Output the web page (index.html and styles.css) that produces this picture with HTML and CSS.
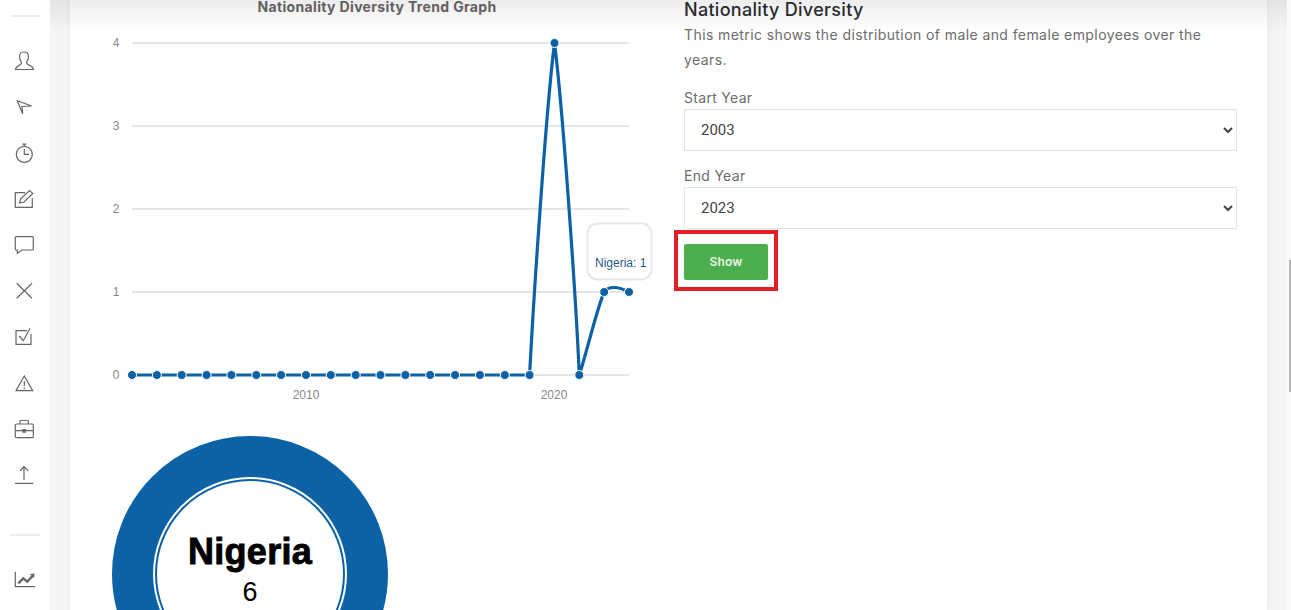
FILE: index.html
```html
<!DOCTYPE html>
<html lang="en">
<head>
  <meta charset="UTF-8" />
  <meta name="viewport" content="width=device-width, initial-scale=1.0"/>
  <title>Nationality Diversity</title>
  <link rel="stylesheet" href="styles.css">
</head>
<body>
  <aside class="sidebar">
    <div class="side-rule"></div>
    <nav class="side-icons">
      <svg class="icon" viewBox="0 0 24 24"><path d="M8.500 13.500C7 11.500 6.500 9.500 6.500 7.500 6.500 4.500 8.500 3 11 3s4.500 1.500 4.500 4.500c0 2-.5 4-2 6 0 1.500 1.500 2 3.500 3s3.500 2 3.500 4H2.500c0-2 1.500-3 3.500-4s2.500-1.500 2.500-3Z"/></svg>
      <svg class="icon" viewBox="0 0 24 24"><path d="M4.300 5.700 18.700 11 9 11.500 9.700 19Z"/></svg>
      <svg class="icon" viewBox="0 0 24 24"><circle cx="11.300" cy="13.300" r="8"/><path d="M9.300 3.200h4M11.300 3.200v2M11.300 8v5.300H16"/></svg>
      <svg class="icon" viewBox="0 0 24 24"><path d="M12 5.700H2.300v14.600h17V11"/><path d="M6.500 16l1-4 9-8.500 3.300 3L11 15Z"/></svg>
      <svg class="icon" viewBox="0 0 24 24"><path d="M3.300 3.700h16a1 1 0 0 1 1 1V16a1 1 0 0 1-1 1H9l-4.700 3.300V17h-1a1 1 0 0 1-1-1V4.700a1 1 0 0 1 1-1Z"/></svg>
      <svg class="icon" viewBox="0 0 24 24"><path d="M3.700 4.300 19 19.300M19 4.300 3.700 19.300"/></svg>
      <svg class="icon" viewBox="0 0 24 24"><path d="M14 5.700H3v13.600h15V9"/><path d="M6.300 11l4 4.700L17 3.300"/></svg>
      <svg class="icon" viewBox="0 0 24 24"><path d="M11.300 5 3 19.700h16.700ZM11.300 10v5M11.300 16.600v1.400"/></svg>
      <svg class="icon" viewBox="0 0 24 24"><rect x="2.300" y="7" width="18" height="13.700" rx="1"/><path d="M7 7V4.500A1 1 0 0 1 8 3.500h6.300a1 1 0 0 1 1 1V7M2.300 13.700h18M10 12.700h2.500v2.500H10Z"/></svg>
      <svg class="icon" viewBox="0 0 24 24"><path d="M11 3.700V17M7 8l4-4.300L15.300 8M2 20.300h18.300"/></svg>
    </nav>
    <div class="side-rule side-rule-low"></div>
    <svg class="icon" viewBox="0 0 24 24"><path d="M2.300 3.700v15H22"/><path class="icon-thick" d="M5.300 15.300l5-5 4 3.400 5.200-5.700"/><path class="icon-fill" d="M16.800 6 21.500 5.500 21 10Z"/></svg>
  </aside>

  <main class="main">
    <div class="top-shade"></div>
    <section class="card">
      <div class="chart-col">
        <h3 class="chart-title">Nationality Diversity Trend Graph</h3>
        <svg class="trend" viewBox="70 14 614 406">
          <g class="grid">
            <path d="M132 43H629M132 126H629M132 209H629M132 292H629M132 375H629"/>
          </g>
          <g class="axis-y">
            <text x="116" y="47">4</text>
            <text x="116" y="130">3</text>
            <text x="116" y="213">2</text>
            <text x="116" y="296">1</text>
            <text x="116" y="379">0</text>
          </g>
          <g class="axis-x">
            <text x="306" y="399">2010</text>
            <text x="554" y="399">2020</text>
          </g>
          <path class="line" d="M132 375H529.600C533.500 300 546 110 554.500 43 563 110 576 300 579.300 375 586 355 597 308 604.200 292 608 286 618 286 629 292"/>
          <g class="dots">
            <circle cx="132" cy="375"/><circle cx="156.900" cy="375"/><circle cx="181.700" cy="375"/>
            <circle cx="206.600" cy="375"/><circle cx="231.400" cy="375"/><circle cx="256.300" cy="375"/>
            <circle cx="281.100" cy="375"/><circle cx="306" cy="375"/><circle cx="330.800" cy="375"/>
            <circle cx="355.700" cy="375"/><circle cx="380.500" cy="375"/><circle cx="405.400" cy="375"/>
            <circle cx="430.200" cy="375"/><circle cx="455.100" cy="375"/><circle cx="479.900" cy="375"/>
            <circle cx="504.800" cy="375"/><circle cx="529.600" cy="375"/><circle cx="554.500" cy="43"/>
            <circle cx="579.300" cy="375"/><circle cx="604.200" cy="292"/><circle cx="629" cy="292"/>
          </g>
          <rect class="tip" x="587.500" y="223.500" width="64" height="56" rx="10"/>
          <text class="tip-text" x="595" y="267">Nigeria: 1</text>
        </svg>
        <svg class="donut" viewBox="70 420 360 300">
          <circle class="donut-ring" cx="250" cy="574" r="117.500"/>
          <circle class="donut-inner" cx="250" cy="574" r="94"/>
          <text class="donut-name" x="250" y="564">Nigeria</text>
          <text class="donut-value" x="250" y="601">6</text>
        </svg>
      </div>

      <div class="form-col">
        <h2 class="form-title">Nationality Diversity</h2>
        <p class="form-text">This metric shows the distribution of male and female employees over the years.</p>
        <label class="field-label" for="startYear">Start Year</label>
        <select class="field-select" id="startYear">
          <option>2003</option>
        </select>
        <label class="field-label" for="endYear">End Year</label>
        <select class="field-select" id="endYear">
          <option>2023</option>
        </select>
        <div class="btn-wrap">
          <button class="btn-show" type="button">Show</button>
          <div class="red-mark"></div>
        </div>
      </div>
    </section>
  </main>

  <div class="scroll-track"><div class="scroll-thumb"></div></div>
</body>
</html>
```

FILE: styles.css
```css
html, body {
  height: 100%;
}

body {
  margin: 0;
  height: 610px;
  overflow: hidden;
  display: flex;
  background-color: #fff;
  font-family: 'Inter', 'Noto Sans', sans-serif;
}

/* Barra lateral */
.sidebar {
  width: 50px;
  flex-shrink: 0;
  background-color: #fff;
  padding-top: 15px;
  box-sizing: border-box;
}

.side-rule {
  width: 30px;
  height: 2px;
  margin-left: 10px;
  background-color: #eee;
}

.side-rule-low {
  margin-top: 47px;
  margin-bottom: 32px;
}

.side-icons {
  display: flex;
  flex-direction: column;
  gap: 22px;
  margin-top: 32px;
}

.icon {
  display: block;
  width: 24px;
  height: 24px;
  margin-left: 13px;
  fill: none;
  stroke: #666;
  stroke-width: 1.2;
}

.icon-thick {
  stroke-width: 2.4;
}

.icon-fill {
  fill: #666;
  stroke: none;
}

/* Contenido */
.main {
  position: relative;
  flex: 1;
  background-color: #f5f5f5;
  padding: 0 20px;
  min-width: 0;
}

.top-shade {
  position: absolute;
  top: 0;
  left: 0;
  right: 0;
  height: 32px;
  background: linear-gradient(rgba(0, 0, 0, 0.07), rgba(0, 0, 0, 0));
  pointer-events: none;
}

.card {
  display: grid;
  grid-template-columns: 614px 1fr;
  height: 100%;
  padding-right: 30px;
  background-color: #fff;
  box-shadow: 0 0 8px rgba(0, 0, 0, 0.05);
}

.chart-title {
  margin: 0;
  font-size: 14px;
  line-height: 14px;
  font-weight: 700;
  letter-spacing: 0.35px;
  color: #666;
  text-align: center;
}

.trend {
  display: block;
  width: 614px;
  height: 406px;
}

.grid path {
  fill: none;
  stroke: #e6e6e6;
  stroke-width: 2;
}

.axis-y text,
.axis-x text {
  font-family: 'Liberation Sans', sans-serif;
  font-size: 12px;
  fill: #888;
  text-anchor: middle;
}

.line {
  fill: none;
  stroke: #0c62a5;
  stroke-width: 3.2;
}

.dots circle {
  r: 4.5px;
  fill: #0c62a5;
  stroke: #fff;
  stroke-width: 1;
}

.tip {
  fill: #fff;
  stroke: #e8e8e8;
  stroke-width: 2;
}

.tip-text {
  font-family: 'Liberation Sans', sans-serif;
  font-size: 12px;
  fill: #2a5a8c;
}

.donut {
  display: block;
  width: 360px;
  height: 300px;
}

.donut-ring {
  fill: none;
  stroke: #0c62a5;
  stroke-width: 41;
}

.donut-inner {
  fill: #fff;
  stroke: #0c62a5;
  stroke-width: 2;
}

.donut-name {
  font-family: 'Liberation Sans', sans-serif;
  font-size: 36px;
  font-weight: 700;
  letter-spacing: 0.3px;
  fill: #000;
  stroke: #000;
  stroke-width: 0.9;
  text-anchor: middle;
}

.donut-value {
  font-family: 'Liberation Sans', sans-serif;
  font-size: 27px;
  fill: #000;
  text-anchor: middle;
}

/* Formulario */
.form-title {
  margin: 0;
  font-size: 18px;
  line-height: 20px;
  font-weight: 500;
  letter-spacing: 0.3px;
  color: #2b2b33;
}

.form-text {
  max-width: 530px;
  margin: 2px 0 0;
  padding-bottom: 1px;
  font-size: 14px;
  line-height: 25px;
  letter-spacing: 0.41px;
  color: #6c6c6c;
}

.field-label {
  display: block;
  margin-top: 15px;
  font-size: 14px;
  line-height: 20px;
  letter-spacing: 0.3px;
  color: #6c6c6c;
}

.field-select {
  display: block;
  width: 100%;
  height: 42px;
  margin-top: 1px;
  padding: 0 12px;
  background-color: #fff;
  border: 1px solid #e4e4e4;
  border-radius: 0;
  font-family: 'Roboto', sans-serif;
  font-size: 15px;
  color: #444;
}

.btn-wrap {
  position: relative;
  width: 84px;
  margin-top: 15px;
}

.btn-show {
  display: block;
  width: 84px;
  height: 36px;
  padding: 0 0 2px;
  background-color: #4cae4c;
  border: none;
  border-radius: 2px;
  font-family: 'Inter', sans-serif;
  font-size: 12px;
  font-weight: 600;
  letter-spacing: 0.2px;
  color: #e8f6e8;
}

/* Recuadro rojo de la captura */
.red-mark {
  position: absolute;
  top: -14px;
  left: -10px;
  width: 96px;
  height: 53px;
  border: 4px solid #e01f26;
}

.scroll-track {
  width: 4px;
  flex-shrink: 0;
  background-color: #fafafa;
}

.scroll-thumb {
  width: 2.5px;
  height: 132px;
  margin-top: 260px;
  margin-left: 1.5px;
  background-color: #b5b5b5;
}
```
